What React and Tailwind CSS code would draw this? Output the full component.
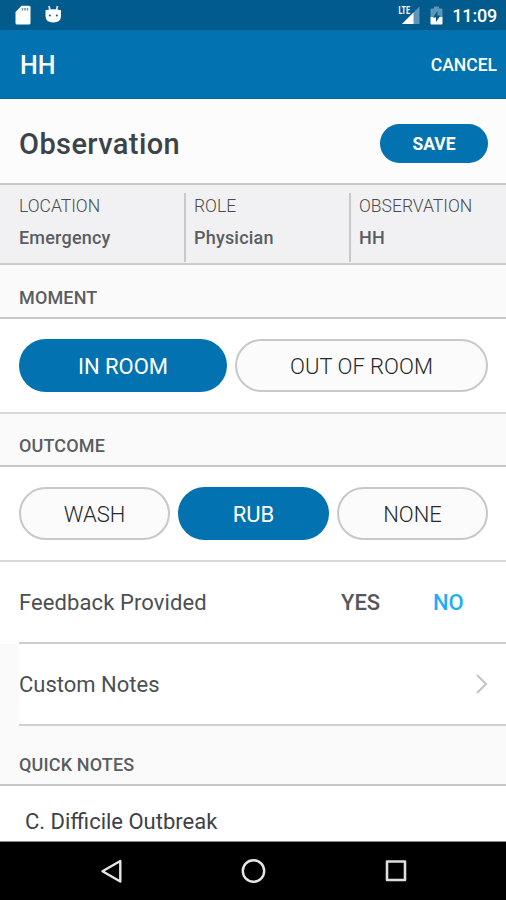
import React from 'react';

const details = [
  { label: 'LOCATION', value: 'Emergency' },
  { label: 'ROLE', value: 'Physician' },
  { label: 'OBSERVATION', value: 'HH' },
];

const StatusBar = () => (
  <div className="flex h-[30px] shrink-0 items-center justify-between bg-[#015b8d] pl-[15px] pr-[9px] text-white">
    <div className="flex items-center gap-[13px]">
      {/* SD card */}
      <svg width="17" height="20" viewBox="0 0 17 20">
        <path d="M6.5 0.8H14q1.5 0 1.5 1.5V18q0 1.5-1.5 1.5H2q-1.5 0-1.5-1.5V7Z" fill="#fff" />
        <path d="M7.5 3v2.5M10 3v2.5M12.5 3v2.5" stroke="#5c96b8" strokeWidth="1.5" />
      </svg>
      {/* Android head */}
      <svg width="17" height="20" viewBox="0 0 17 20">
        <path d="M4 1l1 4M12.5 1l-1 4" stroke="#d5e4ed" strokeWidth="1.8" />
        <path d="M0.5 5.2Q8.5 3.5 16 5.2V11q0 6.5-7.7 6.5T0.5 11Z" fill="#fff" />
        <circle cx="4.8" cy="10.5" r="1" fill="#015b8d" />
        <circle cx="11.8" cy="10.5" r="1" fill="#015b8d" />
      </svg>
    </div>
    <div className="flex items-center">
      <svg width="22" height="20" viewBox="0 0 22 20" className="mr-[10px]">
        <path d="M21.5 1.5V19H4Z" fill="#5c96b8" />
        <path d="M15.5 7.5V19H4Z" fill="#fff" />
        <text x="0.5" y="9" fill="#fff" fontFamily="Roboto, sans-serif" fontSize="11" fontWeight="700" textLength="11.5" lengthAdjust="spacingAndGlyphs">LTE</text>
      </svg>
      <svg width="13" height="19" viewBox="0 0 13 19" className="mr-[9px]">
        <path d="M4 0.5h5v2h2.5q1 0 1 1V11H0.5V3.5q0-1 1-1H4Z" fill="#5c96b8" />
        <path d="M0.5 11h12v6.5q0 1-1 1h-10q-1 0-1-1Z" fill="#fff" />
        <path d="M7.5 5L3 11.5h3V16l4.5-6.5H7.5Z" fill="#015b8d" />
      </svg>
      <span className="pt-0.5 text-[18px] font-medium leading-none tracking-[-0.2px]">11:09</span>
    </div>
  </div>
);

const SectionHeader = ({ title, className }) => (
  <div className={`flex shrink-0 items-end border-b-2 border-[#c6c6c7] bg-[#fafafa] pl-[19px] text-[18px] font-medium leading-5 tracking-[0.15px] text-[#5c5d60] ${className}`}>
    {title}
  </div>
);

const Pill = ({ active, className, children }) => (
  <button
    className={`flex h-[53px] items-center justify-center rounded-full pt-0.5 text-[22px] ${
      active ? 'bg-[#0272b0] text-white' : 'border-2 border-[#c8c8c9] bg-[#fbfbfb] text-[#24292c] font-light'
    } ${className}`}
  >
    {children}
  </button>
);

const NavBar = () => (
  <div className="flex h-[58px] shrink-0 items-center justify-between bg-black pl-[100px] pr-[98px]">
    <svg width="24" height="26" viewBox="0 0 24 26" fill="none" stroke="#e6e6e6" strokeWidth="2.4" strokeLinejoin="round">
      <path d="M20.3 3V23.5L2.5 13.2Z" />
    </svg>
    <svg width="26" height="26" viewBox="0 0 26 26" fill="none" stroke="#e6e6e6" strokeWidth="2.4">
      <circle cx="12.5" cy="13" r="10.7" />
    </svg>
    <svg width="24" height="24" viewBox="0 0 24 24" fill="none" stroke="#dedede" strokeWidth="2.6" strokeLinejoin="round">
      <rect x="3" y="2.5" width="18" height="18.5" />
    </svg>
  </div>
);

const App = () => {
  return (
    <div className="flex h-[900px] w-[506px] flex-col overflow-hidden bg-white font-['Roboto',sans-serif]">
      <StatusBar />

      {/* App bar */}
      <div className="flex h-[69px] shrink-0 items-center justify-between border-b border-[#0a629c] bg-[#0272b0] pl-5 pr-[9px] text-white">
        <span className="pt-1 text-[25px] font-medium">HH</span>
        <span className="pt-[3px] text-[17.5px] font-medium">CANCEL</span>
      </div>

      {/* Title */}
      <div className="flex h-[86px] shrink-0 items-center justify-between border-b-2 border-[#c6c6c7] bg-[#fcfcfc] pl-[19px] pr-[18px] pt-[3px]">
        <h1 className="pt-1 text-[29px] font-medium tracking-[0.4px] text-[#3a4449]">Observation</h1>
        <button className="mt-px h-[39px] w-[108px] rounded-full bg-[#0272b0] pt-[3px] text-[17.5px] font-bold text-white">SAVE</button>
      </div>

      {/* Details */}
      <div className="flex h-20 shrink-0 border-b-2 border-[#cdcdce] bg-[#f1f1f3] pl-[19px] pt-2">
        {details.map((item, index) => (
          <div
            key={item.label}
            className={`flex h-[69px] flex-col ${index > 0 ? 'border-l-2 border-[#c8c8c9] pl-2' : ''} ${index < 2 ? 'w-[165px]' : 'flex-1'}`}
          >
            <span className="mt-[3px] text-[17.5px] font-light leading-5 text-[#4b4c4f]">{item.label}</span>
            <span className="mt-3 text-[18px] font-medium leading-5 tracking-[0.2px] text-[#5c5d60]">{item.value}</span>
          </div>
        ))}
      </div>

      <SectionHeader title="MOMENT" className="h-[54px] pb-[9px]" />
      <div className="flex h-[95px] shrink-0 items-start gap-2 border-b-2 border-[#d8d8d9] pl-[19px] pr-[18px] pt-5">
        <Pill active className="w-[208px]">IN ROOM</Pill>
        <Pill className="w-[253px]">OUT OF ROOM</Pill>
      </div>

      <SectionHeader title="OUTCOME" className="h-[53px] pb-[9px]" />
      <div className="flex h-[95px] shrink-0 items-start gap-2 border-b-2 border-[#d8d8d9] pl-[19px] pr-[18px] pt-5">
        <Pill className="w-[151px]">WASH</Pill>
        <Pill active className="w-[151px]">RUB</Pill>
        <Pill className="w-[151px]">NONE</Pill>
      </div>

      {/* Feedback */}
      <div className="shrink-0 bg-white pl-[19px]">
        <div className="flex h-[82px] items-center border-b-2 border-[#cdcdce] text-[22px]">
          <span className="flex-1 tracking-[0.1px] text-[#4b5053]">Feedback Provided</span>
          <span className="w-[92px] font-medium text-[#56575a]">YES</span>
          <span className="w-[73px] font-medium text-[#1cb0f0]">NO</span>
        </div>
      </div>

      <div className="shrink-0 bg-[#fafafa] pl-[19px]">
        <div className="flex h-[82px] items-center justify-between border-b-2 border-[#d0d0d1] bg-white pr-[18px] text-[22px]">
          <span className="text-[#4b5053]">Custom Notes</span>
          <svg width="13" height="22" viewBox="0 0 13 22" fill="none" stroke="#c4c4c5" strokeWidth="2">
            <path d="M2 2L11 11L2 20" />
          </svg>
        </div>
      </div>

      <SectionHeader title="QUICK NOTES" className="h-[60px] pb-[9px]" />
      <div className="flex h-[56px] shrink-0 items-center border-b border-[#8a8a8a] pl-[25px] pt-4 text-[22px] text-[#3c4246]">
        C. Difficile Outbreak
      </div>

      <NavBar />
    </div>
  );
};

export default App;
